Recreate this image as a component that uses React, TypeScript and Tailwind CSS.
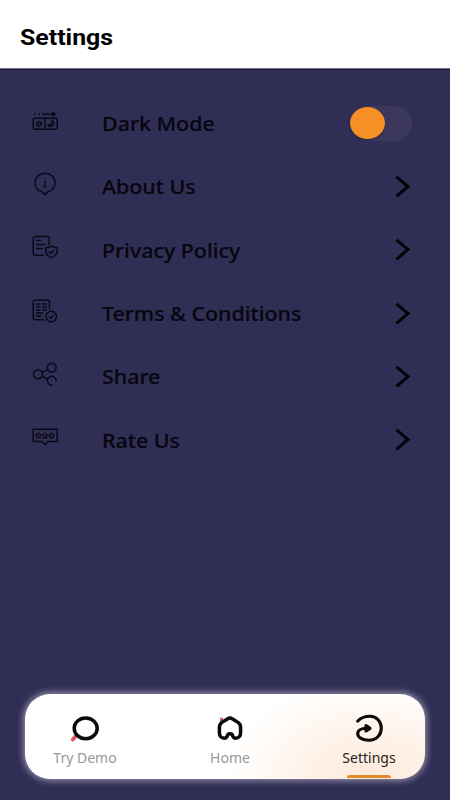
import type { ReactNode } from "react";

const rows: { label: string; icon: ReactNode }[] = [
  {
    label: "Dark Mode",
    icon: (
      <>
        <rect x="3.2" y="11.2" width="24" height="11" rx="1.6" />
        <path d="M15 11.2v11M4 7h2M8 7h2M12 7h11" />
        <path d="M22.5 4.6 26 7l-3.5 2.4z" fill="#0a0817" strokeWidth="0.8" />
        <circle cx="9" cy="16.8" r="1.8" />
        <path
          d="M9 12.8v1.4M9 19.4v1.4M5 16.8h1.4M11.6 16.8H13M6.2 14l.9.9M11 18.7l.9.9M6.2 19.6l.9-.9M11 14.9l.9-.9"
          strokeWidth="1"
        />
        <path d="M22.2 13.6c2.4 1.3 2.2 5-1 5.7-1.5.3-2.9-.3-3.4-1.4 2.6.4 4.6-1.6 4.4-4.3z" />
      </>
    ),
  },
  {
    label: "About Us",
    icon: (
      <>
        <path d="m15 24.6-3-2.8C7.8 20.7 4.9 17 4.9 12.7c0-5.2 4.5-9.4 10.1-9.4s10.1 4.2 10.1 9.4c0 4.3-2.9 8-7.1 9.1z" />
        <path d="M13.8 11.2H15v5.6M13.3 16.8h3.4M15 7.7v1.2" strokeWidth="1.2" />
      </>
    ),
  },
  {
    label: "Privacy Policy",
    icon: (
      <>
        <path d="M14 22.3H5.2a2 2 0 0 1-2-2V5.5a2 2 0 0 1 2-2h12a2 2 0 0 1 2 2V12M6 7.5h5M6 11.5h9.5M6 15.5h6.5" />
        <path d="M21.4 12.8c1.7 1.3 3.5 1.8 5.7 1.9v3.8c0 2.9-2.3 4.9-5.7 6.2-3.4-1.3-5.7-3.3-5.7-6.2v-3.8c2.2-.1 4-.6 5.7-1.9z" />
        <path d="m18.7 18.5 2 2 3.5-3.7" />
      </>
    ),
  },
  {
    label: "Terms & Conditions",
    icon: (
      <>
        <path d="M14.5 22.8H5.2a2 2 0 0 1-2-2V5a2 2 0 0 1 2-2h12.3a2 2 0 0 1 2 2v7.5" />
        <path d="M6 7h4.5M12 7h5M6 10h4.5M12 10h5M6 13h4.5M12 13h5M6 16h7M6 19h5.5" />
        <circle cx="21.2" cy="19.5" r="5.2" />
        <path d="m18.8 19.5 1.8 1.7 3-3.2" />
      </>
    ),
  },
  {
    label: "Share",
    icon: (
      <>
        <circle cx="8" cy="14.3" r="4.5" />
        <circle cx="21.7" cy="7.6" r="4.4" />
        <path d="M22.5 25a4.4 4.4 0 1 1 3.6-3.5M12.3 12.3l5.3-2.7M12.3 16.4l5.2 2.6" />
      </>
    ),
  },
  {
    label: "Rate Us",
    icon: (
      <>
        <path d="M3.2 6.3h23.9v12.3H18l-3 2.8-3-2.8H3.2z" />
        {[8.5, 15, 21.5].map((x) => (
          <path
            key={x}
            transform={`translate(${x} 12.6)`}
            d="M0-2.8.9-.9l2 .2L1.4.7l.4 2L0 1.7l-1.8 1 .4-2L-2.9-.7l2-.2z"
            strokeWidth="1.1"
          />
        ))}
      </>
    ),
  },
];

function Chevron() {
  return (
    <svg className="h-6 w-5" viewBox="0 0 20 24" fill="none" stroke="#030308" strokeWidth="3">
      <path d="M4.5 1.8 16 11.5 4.5 21.3" />
    </svg>
  );
}

function Toggle() {
  return (
    <div className="-mt-px h-[35px] w-[62px] rounded-full bg-[#3c385d] pt-px">
      <div className="h-8 w-[35px] rounded-[50%] bg-[#f69026] shadow-[0_1px_2px_rgba(0,0,0,0.4)]" />
    </div>
  );
}

function NavItem({ label, active, children }: { label: string; active?: boolean; children: ReactNode }) {
  return (
    <div className="relative flex w-20 flex-col items-center pt-[18px]">
      <svg className="h-8 w-8" viewBox="0 0 32 32" fill="none" stroke="#0b0a0b" strokeWidth="3.5" strokeLinecap="round" strokeLinejoin="round">
        {children}
      </svg>
      <span className={active ? "mt-1 text-sm leading-5 text-[#29211d]" : "mt-1 text-sm leading-5 text-[#999]"}>
        {label}
      </span>
      {active && <div className="absolute bottom-[1px] h-[3px] w-11 rounded-t-sm bg-[#e08a2c]" />}
    </div>
  );
}

export default function App() {
  return (
    <div className="flex h-[800px] w-[450px] flex-col overflow-hidden bg-[#312e56] font-['Noto_Sans',sans-serif]">
      <header className="flex h-[69px] shrink-0 items-center border-b border-[#77748e] bg-white pt-[7px] pl-5">
        <h1 className="origin-left scale-x-[1.13] font-[Roboto,sans-serif] text-[22px] font-bold text-black">Settings</h1>
      </header>
      <div className="h-px shrink-0 bg-[#1d193d]" />

      <main className="mt-[22px] grid h-[380px] grid-rows-6">
        {rows.map((row, i) => (
          <div key={row.label} className="flex items-center pr-[38px] pl-[30px]">
            <svg className="mb-1 h-[30px] w-[30px]" viewBox="0 0 30 30" fill="none" stroke="#0a0817" strokeWidth="1.5" strokeLinejoin="round">
              {row.icon}
            </svg>
            <div className="ml-[42px] flex-1 pt-px">
              <span className="inline-block origin-left scale-x-[1.07] text-xl font-medium whitespace-nowrap text-[#07060f] [-webkit-text-stroke:0.2px_#07060f]">
                {row.label}
              </span>
            </div>
            {i === 0 ? <Toggle /> : <Chevron />}
          </div>
        ))}
      </main>

      <nav className="mx-[25px] mt-auto mb-[21px] flex h-[85px] rounded-[25px] bg-white bg-[radial-gradient(ellipse_145px_95px_at_86%_95%,#fdebdd_0%,#fef1e7_40%,#fffaf6_75%,#ffffff_100%)] pl-5 shadow-[0_0_6px_2px_rgba(255,255,255,0.45)]">
        <NavItem label="Try Demo">
          <path d="m6.5 24.5-2.7 3" stroke="#e2525c" strokeWidth="3.8" />
          <ellipse cx="16.7" cy="16.3" rx="11.5" ry="10.4" />
        </NavItem>
        <div className="ml-[65px] flex">
          <NavItem label="Home">
            <path d="M7.5 5.8v4" stroke="#c8586a" strokeWidth="3" strokeLinecap="butt" />
            <path d="M16 6c-1 0-2 .6-3 1.2l-5 3.2c-2 1.4-2.6 2.800-2.6 5.100v5.300c0 3.200 2 5.400 4.800 5.400 1.800 0 2.600-.8 3-2.200.4-1.400 1.200-2.200 2.800-2.200s2.400.8 2.800 2.200c.4 1.400 1.200 2.200 3 2.200 2.800 0 4.800-2.200 4.800-5.400v-5.300c0-2.300-.6-3.700-2.600-5.100l-5-3.200C18 6.600 17 6 16 6z" />
          </NavItem>
        </div>
        <div className="ml-[59px] flex">
          <NavItem label="Settings" active>
            <path d="M4.6 9.2C7.5 6 12 4.2 17 4.200c6.500 0 11.300 5.300 11.300 12 0 6.800-5 12-12.300 12-6.500 0-11.300-2.600-11.300-6.400 0-3.500 3.800-5.500 8.300-5.500" strokeWidth="3.1" />
            <path d="M13 13.700v5.200l4-2.600z" fill="#0b0a0b" strokeWidth="3.2" />
          </NavItem>
        </div>
      </nav>
    </div>
  );
}
